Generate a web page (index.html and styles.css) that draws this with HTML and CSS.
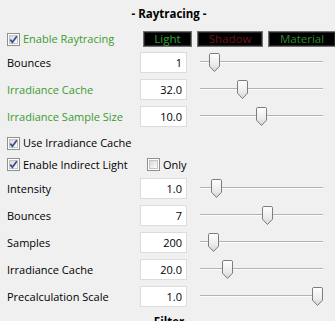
FILE: index.html
```html
<!DOCTYPE html>
<html lang="en">
<head>
  <meta charset="UTF-8">
  <title>Raytracing</title>
  <link rel="stylesheet" href="styles.css">
</head>
<body>

  <!-- shared shapes for checkboxes and slider thumbs -->
  <svg class="defs" width="0" height="0">
    <defs>
      <linearGradient id="boxFill" x1="0" y1="0" x2="1" y2="1">
        <stop offset="0" stop-color="#d6d6d6"/>
        <stop offset="1" stop-color="#ffffff"/>
      </linearGradient>
      <linearGradient id="thumbFill" x1="0" y1="0" x2="0" y2="1">
        <stop offset="0" stop-color="#ffffff"/>
        <stop offset="0.6" stop-color="#ececec"/>
        <stop offset="1" stop-color="#d4d4d4"/>
      </linearGradient>
      <symbol id="chk-off" viewBox="0 0 13 13">
        <rect x="0.5" y="0.5" width="12" height="12" fill="#fff" stroke="#8e8f8f"/>
        <rect x="2.5" y="2.5" width="8" height="8" fill="url(#boxFill)" stroke="#c4c4c4"/>
      </symbol>
      <symbol id="chk-on" viewBox="0 0 13 13">
        <rect x="0.5" y="0.5" width="12" height="12" fill="#fff" stroke="#8e8f8f"/>
        <rect x="2.5" y="2.5" width="8" height="8" fill="url(#boxFill)" stroke="#c4c4c4"/>
        <path d="M3.3 6.6 L5.4 9.2 L9.8 3.2" fill="none" stroke="#3d4f8c" stroke-width="1.8"/>
      </symbol>
      <symbol id="thumb" viewBox="0 0 11 19">
        <path d="M1.8 0.5 H9.2 Q10.5 0.5 10.5 1.8 V13.2 L5.5 18.5 L0.5 13.2 V1.8 Q0.5 0.5 1.8 0.5 Z" fill="url(#thumbFill)" stroke="#7c7c7c"/>
      </symbol>
    </defs>
  </svg>

  <div class="panel">
    <div class="section-title">- Raytracing -</div>

    <div class="head-row">
      <label class="check green"><svg class="box"><use href="#chk-on"/></svg>Enable Raytracing</label>
      <span class="tab tab-light">Light</span>
      <span class="tab tab-shadow">Shadow</span>
      <span class="tab tab-material">Material</span>
    </div>

    <div class="row">
      <span class="label">Bounces</span>
      <input class="num" type="text" value="1" readonly>
      <div class="slider" style="--p: 0.08"><span class="track"></span><svg class="thumb"><use href="#thumb"/></svg></div>
    </div>
    <div class="row">
      <span class="label green">Irradiance Cache</span>
      <input class="num" type="text" value="32.0" readonly>
      <div class="slider" style="--p: 0.33"><span class="track"></span><svg class="thumb"><use href="#thumb"/></svg></div>
    </div>
    <div class="row">
      <span class="label green">Irradiance Sample Size</span>
      <input class="num" type="text" value="10.0" readonly>
      <div class="slider" style="--p: 0.50"><span class="track"></span><svg class="thumb"><use href="#thumb"/></svg></div>
    </div>

    <div class="check-row first">
      <label class="check"><svg class="box"><use href="#chk-on"/></svg>Use Irradiance Cache</label>
    </div>
    <div class="check-row">
      <label class="check"><svg class="box"><use href="#chk-on"/></svg>Enable Indirect Light</label>
      <label class="check"><svg class="box"><use href="#chk-off"/></svg>Only</label>
    </div>

    <div class="row">
      <span class="label">Intensity</span>
      <input class="num" type="text" value="1.0" readonly>
      <div class="slider" style="--p: 0.10"><span class="track"></span><svg class="thumb"><use href="#thumb"/></svg></div>
    </div>
    <div class="row">
      <span class="label">Bounces</span>
      <input class="num" type="text" value="7" readonly>
      <div class="slider" style="--p: 0.55"><span class="track"></span><svg class="thumb"><use href="#thumb"/></svg></div>
    </div>
    <div class="row">
      <span class="label">Samples</span>
      <input class="num" type="text" value="200" readonly>
      <div class="slider" style="--p: 0.07"><span class="track"></span><svg class="thumb"><use href="#thumb"/></svg></div>
    </div>
    <div class="row">
      <span class="label">Irradiance Cache</span>
      <input class="num" type="text" value="20.0" readonly>
      <div class="slider" style="--p: 0.20"><span class="track"></span><svg class="thumb"><use href="#thumb"/></svg></div>
    </div>
    <div class="row">
      <span class="label">Precalculation Scale</span>
      <input class="num" type="text" value="1.0" readonly>
      <div class="slider" style="--p: 1"><span class="track"></span><svg class="thumb"><use href="#thumb"/></svg></div>
    </div>

    <div class="section-title next">- Filter -</div>
  </div>

</body>
</html>
```

FILE: styles.css
```css
body {
  margin: 0;
  background-color: #f0f0f0;
  font-family: "Open Sans", "DejaVu Sans", sans-serif;
  font-size: 11px;
  line-height: 16px;
  color: #000;
}

.defs {
  position: absolute;
  width: 0;
  height: 0;
}

.panel {
  padding: 0 4px 0 7px;
}

.section-title {
  text-align: center;
  font-weight: bold;
  font-size: 11.5px;
  padding: 6px 0 7px;
}

.section-title.next {
  margin-top: 4px;
  padding-top: 0;
}

.green {
  color: #3a9c2c;
}

/* Header row with the three pass tabs */
.head-row {
  display: grid;
  grid-template-columns: 131px 49px 66px 68px;
  column-gap: 5px;
  height: 20px;
  align-items: center;
}

.tab {
  height: 16px;
  box-sizing: border-box;
  background-color: #000;
  border: 1px solid #707070;
  box-shadow: inset 0 0 0 1px #262626;
  text-align: center;
  line-height: 14px;
  font-size: 11.5px;
}

.tab-light {
  color: #36a536;
}

.tab-shadow {
  color: #701515;
}

.tab-material {
  color: #2b8d2b;
}

/* Checkboxes */
.check {
  display: flex;
  align-items: center;
  gap: 3px;
  white-space: nowrap;
}

.box {
  width: 13px;
  height: 13px;
  flex: none;
}

.check-row {
  display: grid;
  grid-template-columns: 140px auto;
  height: 21px;
  align-items: center;
}

.check-row.first {
  margin-top: 2px;
  height: 22px;
}

/* Value rows */
.row {
  display: grid;
  grid-template-columns: 133px 47px 1fr;
  height: 27px;
  align-items: center;
}

.label {
  white-space: nowrap;
}

.num {
  width: 47px;
  height: 21px;
  box-sizing: border-box;
  margin: 0;
  padding: 0 4px;
  border: 1px solid #dcdcdc;
  background-color: #fff;
  font: inherit;
  color: #000;
  text-align: right;
  outline: none;
}

.slider {
  position: relative;
  width: 123px;
  height: 19px;
  margin-left: 13px;
}

.track {
  display: block;
  margin-top: 8px;
  height: 0;
  border-top: 1px solid #b2b2b2;
  border-bottom: 1px solid #fcfcfc;
}

.thumb {
  position: absolute;
  top: 0;
  left: calc(var(--p) * (100% - 11px));
  width: 11px;
  height: 19px;
}
```
